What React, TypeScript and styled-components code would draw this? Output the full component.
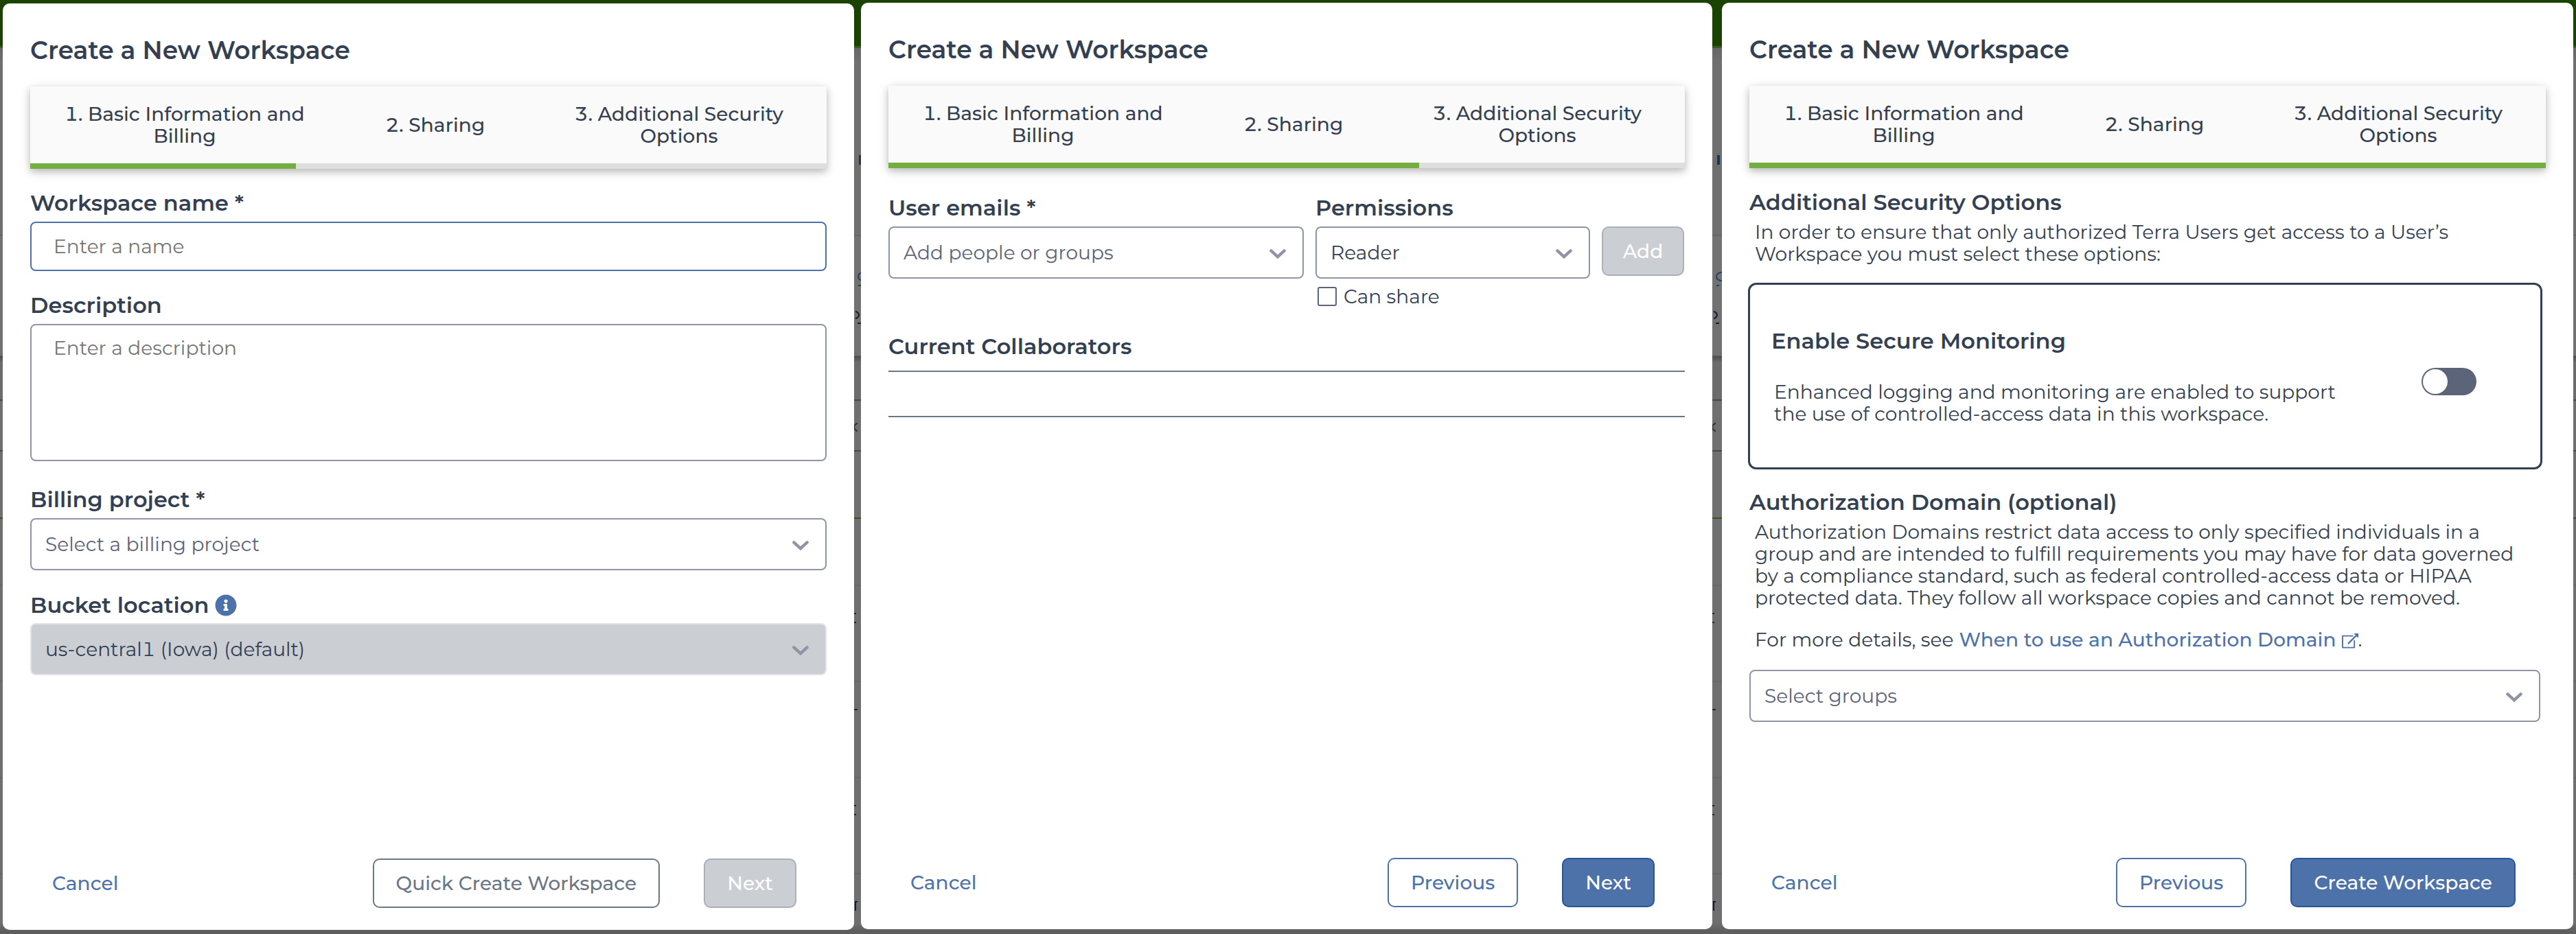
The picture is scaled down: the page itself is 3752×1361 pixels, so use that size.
import styled, { createGlobalStyle } from "styled-components";
import { FaInfoCircle } from "react-icons/fa";

const Chevron = () => (
  <ChevronSvg width="24" height="14" viewBox="0 0 24 14">
    <path
      d="M2.4 2.4 L12 11.2 L21.6 2.4"
      fill="none"
      stroke="#8f95a3"
      strokeWidth="4.4"
      strokeLinecap="round"
    />
  </ChevronSvg>
);

const PopOut = () => (
  <PopOutSvg width="24" height="22" viewBox="0 0 24 22">
    <path
      d="M16.5 3.6 H1 V20.6 H18.2 V10"
      fill="none"
      stroke="#4d72aa"
      strokeWidth="1.9"
      strokeLinejoin="round"
    />
    <path d="M9 15.2 L21 3" stroke="#4d72aa" strokeWidth="2.4" />
    <path d="M17.3 0 H24 V6.8 Z" fill="#4d72aa" />
  </PopOutSvg>
);

const Header = ({ step }: { step: number }) => (
  <>
    <Title>Create a New Workspace</Title>
    <Stepper>
      <Steps>
        <Step>
          1. Basic Information and
          <br />
          Billing
        </Step>
        <Step>2. Sharing</Step>
        <Step>
          3. Additional Security
          <br />
          Options
        </Step>
      </Steps>
      <Track>
        <Progress $step={step} />
      </Track>
    </Stepper>
  </>
);

const BasicInformation = () => (
  <Panel $first>
    <Header step={1} />
    <Label $top={32}>Workspace name *</Label>
    <Input>Enter a name</Input>
    <Label $top={32}>Description</Label>
    <TextArea>Enter a description</TextArea>
    <Label $top={38}>Billing project *</Label>
    <Select>
      Select a billing project
      <Chevron />
    </Select>
    <Label $top={33}>
      Bucket location
      <FaInfoCircle size={32} color="#4d72aa" />
    </Label>
    <Select $disabled>
      us-central1 (Iowa) (default)
      <Chevron />
    </Select>
    <Footer>
      <Cancel>Cancel</Cancel>
      <Button $kind="quick">Quick Create Workspace</Button>
      <Button $kind="disabled">Next</Button>
    </Footer>
  </Panel>
);

const Sharing = () => (
  <Panel>
    <Header step={2} />
    <ShareRow>
      <div>
        <Label>User emails *</Label>
        <Select>
          Add people or groups
          <Chevron />
        </Select>
      </div>
      <div>
        <Label>Permissions</Label>
        <Select $dark>
          Reader
          <Chevron />
        </Select>
        <CheckRow>
          <Checkbox />
          Can share
        </CheckRow>
      </div>
      <AddButton $kind="disabled">Add</AddButton>
    </ShareRow>
    <Label $top={39}>Current Collaborators</Label>
    <Collaborators />
    <Footer>
      <Cancel>Cancel</Cancel>
      <Button $kind="outline">Previous</Button>
      <Button $kind="primary">Next</Button>
    </Footer>
  </Panel>
);

const SecurityOptions = () => (
  <Panel>
    <Header step={3} />
    <Label $top={32}>Additional Security Options</Label>
    <Text>
      In order to ensure that only authorized Terra Users get access to a User’s
      <br />
      Workspace you must select these options:
    </Text>
    <Monitoring>
      <div>
        <Label>Enable Secure Monitoring</Label>
        <MonitoringText>
          Enhanced logging and monitoring are enabled to support
          <br />
          the use of controlled-access data in this workspace.
        </MonitoringText>
      </div>
      <Toggle>
        <Knob />
      </Toggle>
    </Monitoring>
    <Label $top={30}>Authorization Domain (optional)</Label>
    <Text>
      Authorization Domains restrict data access to only specified individuals
      in a
      <br />
      group and are intended to fulfill requirements you may have for data
      governed
      <br />
      by a compliance standard, such as federal controlled-access data or HIPAA
      <br />
      protected data. They follow all workspace copies and cannot be removed.
    </Text>
    <Details>
      For more details, see
      <Link>
        When to use an Authorization Domain
        <PopOut />
      </Link>
      .
    </Details>
    <GroupSelect>
      Select groups
      <Chevron />
    </GroupSelect>
    <Footer>
      <Cancel>Cancel</Cancel>
      <Button $kind="outline">Previous</Button>
      <Button $kind="primary">Create Workspace</Button>
    </Footer>
  </Panel>
);

// bits of the dimmed page that show between the dialogs
const PageBits = () => (
  <>
    <Bit $x={7} $y={226} $w={4} $h={14} $color="#1d3557" />
    <Curve $x={5} $y={396} $w={16} $h={14} $color="#22406a" />
    <Bit $x={6} $y={415} $w={4} $h={2} $color="#22406a" />
    <Curve $x={-6} $y={453} $w={14} $h={12} $color="#141c2b" $right />
    <Bit $x={5} $y={470} $w={5} $h={2} $color="#141c2b" />
    <Curve $x={-1} $y={616} $w={14} $h={13} $color="#2a3038" $short />
    <Bit $x={0} $y={893} $w={3} $h={2} $color="#20242c" />
    <Bit $x={0} $y={906} $w={3} $h={2} $color="#20242c" />
    <Bit $x={0} $y={1033} $w={5} $h={2} $color="#20242c" />
    <Bit $x={0} $y={1173} $w={3} $h={2} $color="#20242c" />
    <Bit $x={0} $y={1186} $w={3} $h={2} $color="#20242c" />
    <Bit $x={1} $y={1313} $w={2} $h={14} $color="#161d2c" />
    <Bit $x={2} $y={1313} $w={3} $h={2} $color="#161d2c" />
  </>
);

const App = () => (
  <Page>
    <GlobalStyle />
    <Gutter $w={4} />
    <BasicInformation />
    <Gutter $w={10}>
      <PageBits />
    </Gutter>
    <Sharing />
    <Gutter $w={14}>
      <PageBits />
    </Gutter>
    <SecurityOptions />
    <Gutter $w={4} />
  </Page>
);

export default App;

const GlobalStyle = createGlobalStyle`
  * {
    box-sizing: border-box;
  }
  body {
    margin: 0;
    color: #333f52;
    font-family: Montserrat, Inter, "Open Sans", sans-serif;
    font-size: 28px;
    font-variant-numeric: tabular-nums;
    letter-spacing: 0.05px;
    line-height: 32px;
  }
`;

const Page = styled.div`
  display: flex;
  align-items: flex-start;
  width: 3752px;
  height: 1361px;
  overflow: hidden;
  background: linear-gradient(
    #1b4300 0 67px,
    #3b5728 67px 70px,
    #666 70px,
    #6f6f6f 90px 342px,
    #656565 342px 344px,
    #727272 344px 518px,
    #4c4c4c 519px,
    #6c6c6c 528px 582px,
    #46484c 582px 584px,
    #707070 584px 656px,
    #46484c 656px 658px,
    #6f6f6f 658px 754px,
    #365519 754px 756px,
    #6f6f6f 756px 852px,
    #676767 852px 854px,
    #6f6f6f 854px 992px,
    #676767 992px 994px,
    #6f6f6f 994px 1132px,
    #676767 1132px 1134px,
    #6f6f6f 1134px 1272px,
    #676767 1272px 1274px,
    #6f6f6f 1274px 1345px,
    #5e5e5e 1356px
  );
`;

const Gutter = styled.div<{ $w: number }>`
  position: relative;
  flex: none;
  width: ${(p) => p.$w}px;
  height: 1361px;
  overflow: hidden;
`;

type BitProps = {
  $x: number;
  $y: number;
  $w: number;
  $h: number;
  $color: string;
};

const Bit = styled.div<BitProps>`
  position: absolute;
  left: ${(p) => p.$x}px;
  top: ${(p) => p.$y}px;
  width: ${(p) => p.$w}px;
  height: ${(p) => p.$h}px;
  background: ${(p) => p.$color};
`;

const Curve = styled(Bit)<{ $right?: boolean; $short?: boolean }>`
  background: none;
  border: 2px solid ${(p) => p.$color};
  border-radius: 50%;
  clip-path: ${(p) => (p.$short ? "inset(0 8px 0 0)" : "none")};
  ${(p) => p.$right && "clip-path: inset(0 0 0 8px);"}
`;

const Panel = styled.div<{ $first?: boolean }>`
  display: flex;
  flex-direction: column;
  flex: none;
  width: 1240px;
  height: 1350px;
  margin-top: ${(p) => (p.$first ? 5 : 4)}px;
  padding: 46px 40px 32px;
  background: #fff;
  border-radius: 10px;
`;

const Title = styled.div`
  margin-bottom: 31px;
  font-size: 36px;
  font-weight: 600;
  line-height: 44px;
`;

const Stepper = styled.div`
  flex: none;
  background: #fafafa;
  box-shadow: 0 4px 10px rgba(0, 0, 0, 0.24), 0 4px 20px rgba(0, 0, 0, 0.08);
`;

const Steps = styled.div`
  display: grid;
  grid-template-columns: 450px 280px 430px;
  height: 112px;
  font-weight: 500;
`;

const Step = styled.div`
  align-self: center;
  text-align: center;
`;

const Track = styled.div`
  height: 8px;
  background: #dedede;
`;

const Progress = styled.div<{ $step: number }>`
  width: calc(100% * ${(p) => p.$step} / 3);
  height: 8px;
  background: #74ae43;
`;

const Label = styled.div<{ $top?: number }>`
  display: flex;
  align-items: center;
  gap: 8px;
  height: 36px;
  margin-top: ${(p) => p.$top || 0}px;
  font-size: 32px;
  font-weight: 600;
  line-height: 36px;
`;

const Input = styled.div`
  display: flex;
  align-items: center;
  height: 72px;
  margin-top: 9px;
  padding-left: 32px;
  color: #757575;
  border: 2px solid #4d72aa;
  border-radius: 8px;
`;

const TextArea = styled(Input)`
  align-items: flex-start;
  height: 200px;
  padding-top: 17px;
  border-color: #8f95a3;
`;

const Select = styled.div<{ $disabled?: boolean; $dark?: boolean }>`
  display: flex;
  align-items: center;
  justify-content: space-between;
  height: 76px;
  margin-top: ${(p) => (p.$disabled ? 8 : 9)}px;
  padding: 0 24px 0 20px;
  color: ${(p) => (p.$disabled || p.$dark ? "#333f52" : "#5c6479")};
  background: ${(p) => (p.$disabled ? "#cbced3" : "#fff")};
  border: 2px solid ${(p) => (p.$disabled ? "#e1e3e6" : "#8f95a3")};
  border-radius: 8px;
`;

const GroupSelect = styled(Select)`
  width: 1152px;
  margin-top: 28px;
`;

const ChevronSvg = styled.svg`
  flex: none;
  margin-top: 3px;
`;

const Footer = styled.div`
  display: flex;
  align-items: center;
  margin-top: auto;
  padding: 0 44px 0 32px;
`;

const Cancel = styled.div`
  margin-right: auto;
  color: #4d72aa;
  font-weight: 500;
`;

const kinds = {
  quick: "color: #6b7686; background: #fff; border-color: #6b7686;",
  outline: "color: #4d72aa; background: #fff; border-color: #4d72aa;",
  primary: "color: #fff; background: #4d72aa; border-color: #27569b;",
  disabled: "color: #fff; background: #cbced3; border-color: #abafb9;",
};

const Button = styled.div<{ $kind: keyof typeof kinds }>`
  display: flex;
  align-items: center;
  height: 72px;
  margin-left: 64px;
  padding: 0 32px;
  font-weight: 500;
  border: 2px solid;
  border-radius: 10px;
  ${(p) => kinds[p.$kind]}
`;

const AddButton = styled(Button)`
  justify-content: center;
  margin: 45px 0 0;
  padding: 0;
`;

const ShareRow = styled.div`
  display: grid;
  grid-template-columns: 605px 400px 120px;
  column-gap: 17px;
  align-items: flex-start;
  margin-top: 40px;
`;

const CheckRow = styled.div`
  display: flex;
  align-items: center;
  gap: 10px;
  height: 32px;
  margin: 10px 0 0 3px;
`;

const Checkbox = styled.div`
  width: 28px;
  height: 28px;
  border: 2px solid #5c6479;
  border-radius: 3px;
`;

const Collaborators = styled.div`
  height: 68px;
  margin-top: 17px;
  border-top: 2px solid #6b7686;
  border-bottom: 2px solid #6b7686;
`;

const Text = styled.div`
  margin: 9px 0 0 8px;
  white-space: nowrap;
`;

const Monitoring = styled.div`
  display: flex;
  align-items: flex-start;
  justify-content: space-between;
  width: 1157px;
  height: 272px;
  margin: 26px 0 0 -2px;
  padding: 64px 93px 0 31px;
  border: 3px solid #333f52;
  border-radius: 12px;
`;

const MonitoringText = styled.div`
  margin: 40px 0 0 4px;
`;

const Toggle = styled.div`
  width: 80px;
  height: 40px;
  margin-top: 57px;
  padding: 2px;
  background: #5c6479;
  border-radius: 20px;
`;

const Knob = styled.div`
  width: 36px;
  height: 36px;
  background: #fff;
  border-radius: 50%;
`;

const Details = styled.div`
  display: flex;
  margin: 29px 0 0 8px;
`;

const Link = styled.div`
  display: flex;
  gap: 8px;
  margin-left: 8px;
  color: #4d72aa;
  font-weight: 500;
`;

const PopOutSvg = styled.svg`
  margin-top: 7px;
`;
